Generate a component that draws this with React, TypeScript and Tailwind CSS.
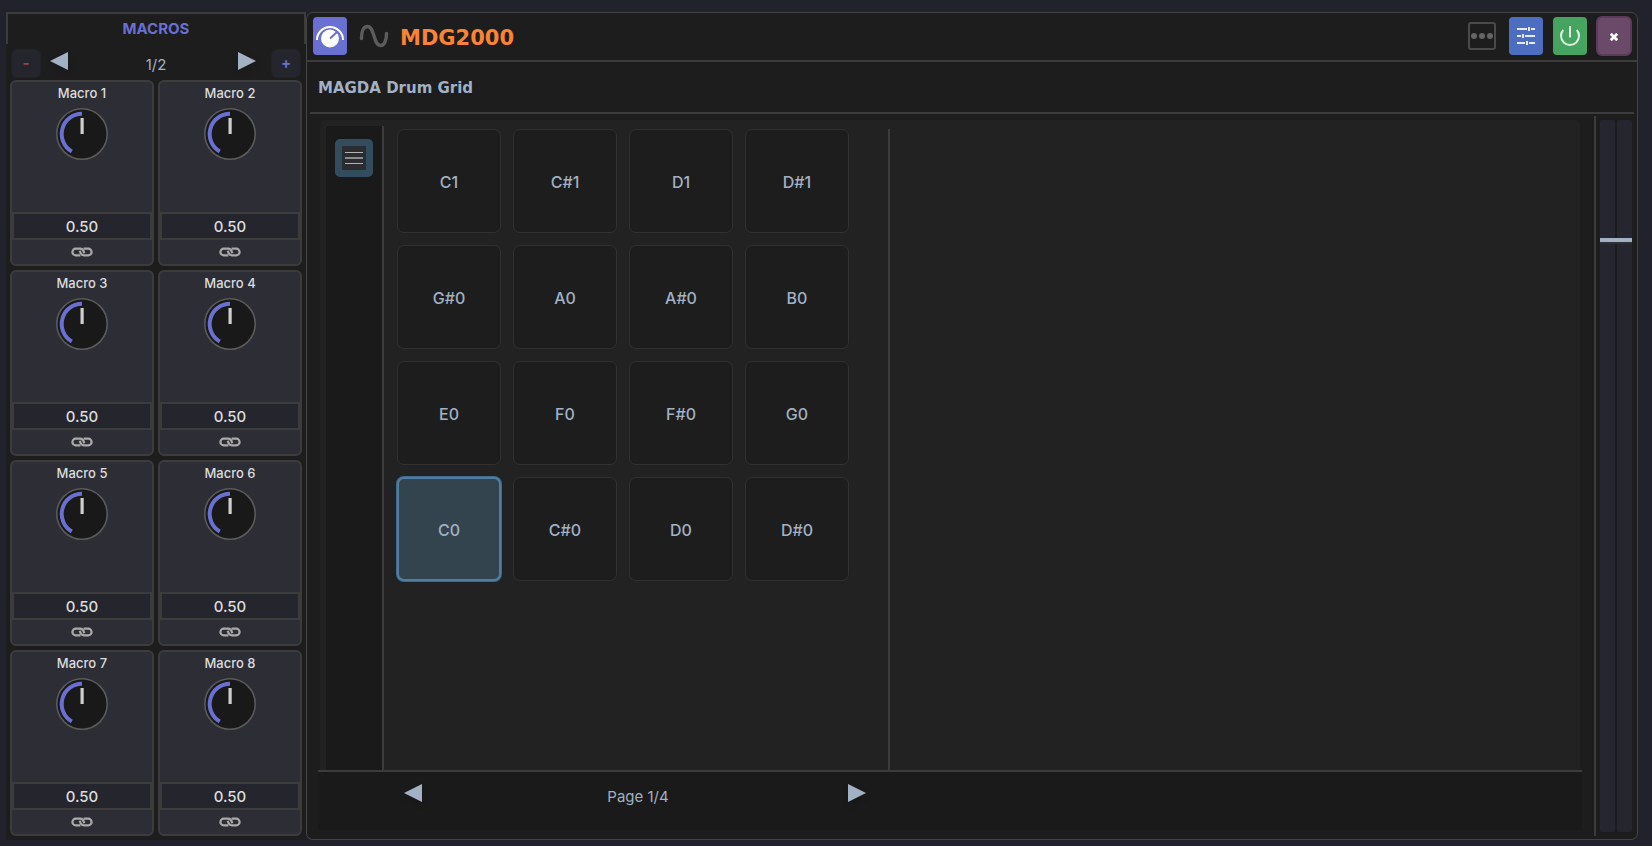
import React, { useState } from 'react';

const MACROS = [1, 2, 3, 4, 5, 6, 7, 8];

const PADS = [
  'C1', 'C#1', 'D1', 'D#1',
  'G#0', 'A0', 'A#0', 'B0',
  'E0', 'F0', 'F#0', 'G0',
  'C0', 'C#0', 'D0', 'D#0',
];

interface ArrowProps {
  dir: 'left' | 'right';
  label: string;
}

const Arrow: React.FC<ArrowProps> = ({ dir, label }) => (
  <button aria-label={label} className="block h-[18px] w-[18px] shrink-0">
    <svg viewBox="0 0 18 18" className="block h-full w-full fill-[#a2b1c3] drop-shadow-md">
      <path d={dir === 'left' ? 'M18 0v18L0 9z' : 'M0 0v18l18-9z'} />
    </svg>
  </button>
);

const LinkIcon = () => (
  <svg width="22" height="10" viewBox="0 0 22 10" fill="none" stroke="#aaaaaa" strokeWidth="2.2">
    <path d="M13.2 6.2C12.600 3 11.400 1.700 9 1.700H4.700A3.300 3.300 0 0 0 4.700 8.300H9.400" />
    <path d="M8.800 3.800C9.400 7 10.600 8.300 13 8.300H17.300A3.300 3.300 0 0 0 17.300 1.700H12.600" />
  </svg>
);

const Knob: React.FC<{ name: string }> = ({ name }) => (
  <label className="relative mt-1 block h-[52px] w-[52px]">
    <svg viewBox="0 0 52 52" className="block h-full w-full">
      <circle cx="26" cy="26" r="25.2" fill="#191919" stroke="#5a5a5a" strokeWidth="1.6" />
      <path d="M15.8 43.5A20.2 20.2 0 0 1 26 5.8" fill="none" stroke="#6a6fd2" strokeWidth="4" />
      <rect x="24.500" y="10" width="3.200" height="16" fill="#cfcfcf" />
    </svg>
    <input type="range" aria-label={name} defaultValue={50} className="absolute inset-0 h-full w-full opacity-0" />
  </label>
);

const MacroCard: React.FC<{ index: number }> = ({ index }) => (
  <div className="flex h-[186px] flex-col items-center rounded-[6px] border-2 border-[#3c3c3c] bg-[#2d2d36]">
    <span className="text-[13px] font-medium leading-[22px] text-[#dcdcdc]">Macro {index}</span>
    <Knob name={`Macro ${index}`} />
    <input
      type="text"
      aria-label={`Macro ${index} value`}
      defaultValue="0.50"
      className="mt-auto h-7 w-full border-2 border-[#3c3c3c] bg-[#25252e] text-center text-[15px] font-medium text-[#dcdcdc]"
    />
    <button aria-label={`Link macro ${index}`} className="flex h-6 w-full items-center justify-center">
      <LinkIcon />
    </button>
  </div>
);

const MacroPanel = () => (
  <aside className="flex w-[300px] shrink-0 flex-col bg-[#1d1d1d]">
    <h2 className="h-8 border-2 border-b-0 border-[#3c3c3c] text-center text-[15px] font-bold leading-[30px] text-[#6a6fd2]">
      MACROS
    </h2>
    <div className="mt-[5px] flex h-[31px] items-start px-[5px]">
      <button aria-label="Remove page" className="h-[29px] w-[30px] rounded-[6px] border border-[#21212a] bg-[#25252d] text-[15px] font-bold text-[#8c4845]">-</button>
      <div className="flex flex-1 items-start pl-[9px] pr-[15px]">
        <div className="pt-[3px]"><Arrow dir="left" label="Previous macros" /></div>
        <span className="flex-1 pl-[6px] text-center text-[15px] leading-8 text-[#a2b1c3]">1/2</span>
        <div className="pt-[3px]"><Arrow dir="right" label="Next macros" /></div>
      </div>
      <button aria-label="Add page" className="h-[29px] w-[30px] rounded-[6px] border border-[#21212a] bg-[#25252d] text-[15px] font-bold text-[#6a6fd2]">+</button>
    </div>
    <div className="grid grid-cols-2 gap-1 px-1 pb-1">
      {MACROS.map((n) => (
        <MacroCard key={n} index={n} />
      ))}
    </div>
  </aside>
);

const DeviceHeader = () => (
  <header className="flex h-[49px] items-center border-b-2 border-[#3c3c3c] pb-px pl-[6px] pr-[5px]">
    <button aria-label="Macros" className="flex h-[38px] w-[34px] items-center justify-center rounded-[4px] bg-[#6a6fd2]">
      <svg width="30" height="26" viewBox="0 0 30 26">
        <path d="M2 17A13 13 0 0 1 28 17" fill="none" stroke="#fff" strokeWidth="2" />
        <circle cx="15" cy="15.5" r="9" fill="#fff" />
        <path d="M15 15.5l7-6.5" stroke="#6a6fd2" strokeWidth="2" />
      </svg>
    </button>
    <button aria-label="Modulators" className="ml-3 flex h-[38px] w-[30px] items-center justify-center">
      <svg width="30" height="24" viewBox="0 0 30 24" fill="none" stroke="#5c5c5c" strokeWidth="3.400" strokeLinecap="round">
        <path d="M2.500 14.500C2.500 7 4.500 2.500 8.500 2.500C16 2.500 14 21.500 21.500 21.500C25.500 21.500 27.500 16 27.500 9.500" />
      </svg>
    </button>
    <h1 className="ml-[11px] pt-[3px] font-['DejaVu_Sans',sans-serif] text-[21px] font-bold leading-6 text-[#fa8334]">MDG2000</h1>
    <div className="ml-auto flex items-center">
      <button aria-label="More options" className="flex h-7 w-7 items-center justify-center gap-[2px] rounded-[3px] border-2 border-[#4a4a4a]">
        <i className="h-[6px] w-[6px] rounded-full bg-[#666666]" />
        <i className="h-[6px] w-[6px] rounded-full bg-[#666666]" />
        <i className="h-[6px] w-[6px] rounded-full bg-[#666666]" />
      </button>
      <button aria-label="Parameters" className="ml-[13px] flex h-[38px] w-[34px] items-center justify-center rounded-[4px] bg-[#4c6dc0]">
        <svg width="18" height="18" viewBox="0 0 18 18" fill="#e4e9f5">
          <path d="M0 1h10v2H0zM14 1h4v2h-4zM11 0h2v4h-2zM0 8h4v2H0zM8 8h10v2H8zM5 7h2v4H5zM0 15h8v2H0zM12 15h6v2h-6zM9 14h2v4H9z" />
        </svg>
      </button>
      <button aria-label="Power" className="ml-[10px] flex h-[38px] w-[34px] items-center justify-center rounded-[4px] bg-[#45a45f]">
        <svg width="22" height="22" viewBox="0 0 22 22" fill="none" stroke="#dceee1" strokeWidth="2">
          <path d="M11 1v11.500M4.200 5A9 9 0 1 0 17.800 5" />
        </svg>
      </button>
      <button aria-label="Close" className="ml-[9px] flex h-10 w-9 items-center justify-center rounded-[6px] border-2 border-[#5a3b5b] bg-[#6b4969]">
        <svg width="8" height="8" viewBox="0 0 8 8" stroke="#fff" strokeWidth="2.800" className="mt-0.5">
          <path d="M.8.8l6.400 6.400M7.200.8L.8 7.200" />
        </svg>
      </button>
    </div>
  </header>
);

const PadGrid = () => {
  const [selected, setSelected] = useState('C0');

  return (
    <div className="mt-[3px] w-[506px] shrink-0 border-r-2 border-[#3c3c3c] pl-[13px]">
      <div className="grid w-max grid-cols-4 gap-3">
        {PADS.map((pad) => (
          <button
            key={pad}
            onClick={() => setSelected(pad)}
            className={`h-[104px] w-[104px] rounded-[7px] pt-0.5 text-[16px] font-medium text-[#a2b1c3] ${
              pad === selected
                ? 'border-2 border-[#4f7ea4] bg-[#34444f] ring-1 ring-[#436a8a]'
                : 'border border-[#303030] bg-[#1d1d1d]'
            }`}
          >
            {pad}
          </button>
        ))}
      </div>
    </div>
  );
};

const Meters = () => (
  <div className="relative mb-[3px] mt-0.5 flex shrink-0 gap-0.5 border-l-2 border-[#3c3c3c] py-1 pl-1 pr-[5px]">
    <div className="w-[15px] rounded-[2px] bg-[#262630]" />
    <div className="w-[15px] rounded-[2px] bg-[#262630]" />
    {/* Fader handle over both meters */}
    <div className="absolute left-1 top-[122px] h-[6px] w-8 border-b-2 border-[#303034] bg-[#a2b1c3]" />
    <input type="range" aria-label="Volume" defaultValue={82} className="absolute inset-0 h-full w-full opacity-0" />
  </div>
);

const Device = () => (
  <main className="flex min-w-0 flex-1 flex-col rounded-[7px] border border-[#444444] bg-[#1d1d1d]">
    <DeviceHeader />
    <h2 className="mx-[3px] h-[52px] border-b-2 border-[#3c3c3c] pl-2 font-['DejaVu_Sans',sans-serif] text-[15px] font-bold leading-[52px] text-[#a2b1c3]">
      MAGDA Drum Grid
    </h2>
    <div className="flex flex-1">
      <div className="mr-3 flex min-w-0 flex-1 flex-col pb-[9px] pl-[11px] pt-[6px]">
        <div className="mx-0.5 flex flex-1 rounded-t-[6px] bg-[#222222] pl-[6px] pt-[6px]">
          <div className="w-[58px] shrink-0 border-r-2 border-[#3c3c3c] bg-[#1a1a1a] pl-[9px] pt-[13px]">
            <button aria-label="Chain list" className="flex h-[38px] w-[38px] items-center justify-center rounded-[5px] bg-[#344d5e]">
              <span className="flex h-6 w-6 flex-col items-center justify-center gap-1 bg-[#2a2c2f]">
                <i className="h-px w-[18px] bg-[#b4b4b4]" />
                <i className="h-0.5 w-[18px] bg-[#8c8c8c]" />
                <i className="h-px w-[18px] bg-[#b4b4b4]" />
              </span>
            </button>
          </div>
          <PadGrid />
        </div>
        <footer className="h-[60px] border-t-2 border-[#3c3c3c] bg-[#1a1a1a] pl-[86px] pt-3">
          <div className="flex w-[462px] items-start">
            <Arrow dir="left" label="Previous page" />
            <span className="flex-1 pl-[6px] text-center text-[15px] leading-[26px] text-[#a2b1c3]">Page 1/4</span>
            <Arrow dir="right" label="Next page" />
          </div>
        </footer>
      </div>
      <Meters />
    </div>
  </main>
);

const App = () => (
  <div className="flex min-h-screen bg-[#22222c] pb-[6px] pl-[6px] pr-[14px] pt-3 font-['Inter',sans-serif]">
    <MacroPanel />
    <Device />
  </div>
);

export default App;
